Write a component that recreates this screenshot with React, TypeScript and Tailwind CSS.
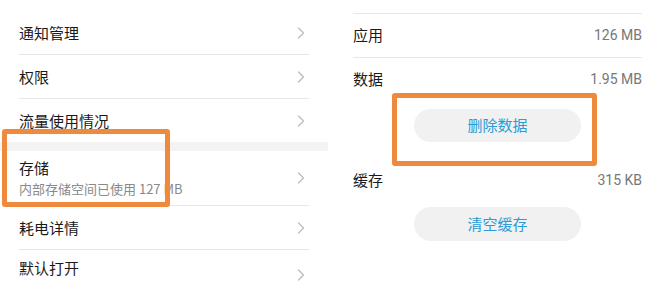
import React from "react";

const font = { fontFamily: '"Noto Sans CJK SC", "Noto Sans", sans-serif' };

function Chevron() {
  return (
    <svg width="8" height="12" viewBox="0 0 8 12" className="shrink-0">
      <polyline points="1.5,1 6.5,6 1.5,11" fill="none" stroke="#bdbdbd" strokeWidth="1.3" strokeLinecap="round" strokeLinejoin="round" />
    </svg>
  );
}

function Row({ title }: { title: string }) {
  return (
    <div className="flex items-center justify-between ml-[19px] mr-[21px] h-[43px]">
      <span className="text-[15px] leading-[20px] text-[#1a1a1a]">{title}</span>
      <div className="pr-[2px]">
        <Chevron />
      </div>
    </div>
  );
}

function Divider() {
  return <div className="h-px bg-[#e8e8e8] ml-[19px] mr-[19px]" />;
}

function KV({ k, v }: { k: string; v: string }) {
  return (
    <div className="flex items-center justify-between h-[43px]">
      <span className="text-[15px] text-[#1a1a1a]">{k}</span>
      <span className="text-[14px] text-[#777]" style={{ fontFamily: 'Roboto, "Noto Sans CJK SC", sans-serif' }}>
        {v}
      </span>
    </div>
  );
}

export default function App() {
  return (
    <div className="relative w-[652px] h-[282px] overflow-hidden bg-white flex" style={font}>
      {/* Left panel */}
      <div className="w-[328px] shrink-0 pt-[11px]">
        <Row title="通知管理" />
        <Divider />
        <Row title="权限" />
        <Divider />
        <Row title="流量使用情况" />
        <div className="h-[9px] bg-[#f3f3f3]" />
        <div className="flex items-center justify-between ml-[19px] mr-[21px] h-[54px]">
          <div className="flex flex-col">
            <span className="text-[15px] leading-[20px] text-[#1a1a1a]">存储</span>
            <span className="text-[13px] leading-[18px] text-[#8a8a8a] mt-[2px]">内部存储空间已使用 127 MB</span>
          </div>
          <div className="pr-[2px]">
            <Chevron />
          </div>
        </div>
        <Divider />
        <Row title="耗电详情" />
        <Divider />
        <div className="flex items-start justify-between ml-[19px] mr-[21px] pt-[8px]">
          <div className="flex flex-col">
            <span className="text-[15px] leading-[20px] text-[#1a1a1a]">默认打开</span>
            <span className="text-[13px] leading-[18px] text-[#b5b5b5] mt-[2px]">未设置默认打开方式</span>
          </div>
          <div className="pr-[2px] pt-[11px]">
            <Chevron />
          </div>
        </div>
      </div>

      {/* Right panel */}
      <div className="flex-1 pl-[25px] pr-[10px]">
        <div className="-mt-[30px]">
          <KV k="总计" v="128 MB" />
        </div>
        <div className="h-px bg-[#e8e8e8]" />
        <KV k="应用" v="126 MB" />
        <div className="h-px bg-[#e8e8e8]" />
        <KV k="数据" v="1.95 MB" />
        <div className="flex justify-center mt-[8px]">
          <div className="w-[167px] h-[33px] rounded-full bg-[#f1f1f1] flex items-center justify-center text-[15px] text-[#2b9cd6]">
            删除数据
          </div>
        </div>
        <div className="mt-[17px]">
          <KV k="缓存" v="315 KB" />
        </div>
        <div className="flex justify-center mt-[5px]">
          <div className="w-[167px] h-[34px] rounded-full bg-[#f1f1f1] flex items-center justify-center text-[15px] text-[#2b9cd6]">
            清空缓存
          </div>
        </div>
      </div>

      {/* Orange highlight boxes */}
      <div className="absolute left-[2px] top-[129px] w-[168px] h-[78px] border-[5px] border-[#ef8a3c] rounded-[3px]" />
      <div className="absolute left-[392px] top-[93px] w-[205px] h-[73px] border-[5px] border-[#ef8a3c] rounded-[3px]" />
    </div>
  );
}
